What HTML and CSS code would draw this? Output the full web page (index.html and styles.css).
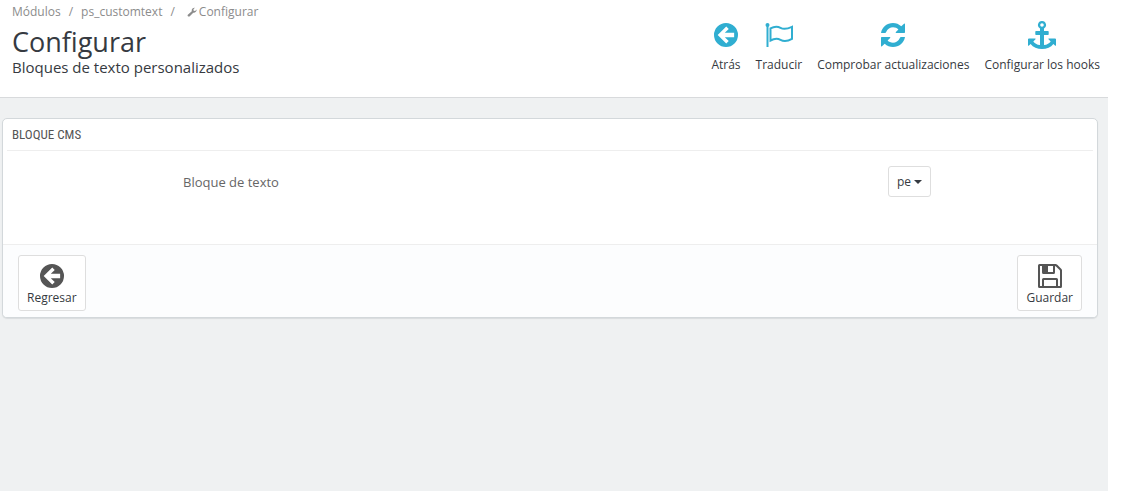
FILE: index.html
```html
<!DOCTYPE html>
<html lang="es">
<head>
    <meta charset="UTF-8">
    <meta name="viewport" content="width=device-width, initial-scale=1.0">
    <title>Configurar</title>
    <link rel="stylesheet" href="styles.css">
</head>
<body>

<div class="page">
    <!-- Header -->
    <header class="page-head">
        <div class="page-heading">
            <nav class="breadcrumb">
                <a href="#">Módulos</a>
                <span class="separator">/</span>
                <a href="#">ps_customtext</a>
                <span class="separator">/</span>
                <a href="#" class="current"><svg class="icon-wrench" viewBox="0 0 24 24"><path d="M2 18.500 11.500 10C10.500 5 14 1.500 19 2l-3.500 3.500 .5 3.500 3.500 .5L23 6c.5 5-3.500 8.500-8 7.500L6 22.500c-2.500 2-6-1.500-4-4z"/></svg>Configurar</a>
            </nav>
            <h1 class="page-title">Configurar</h1>
            <h4 class="page-subtitle">Bloques de texto personalizados</h4>
        </div>
        <div class="toolbar">
            <a href="#" class="toolbar-btn">
                <svg class="icon" viewBox="0 0 28 28"><path fill-rule="evenodd" d="M14 0a14 14 0 1 1 0 28a14 14 0 1 1 0-28zM4.300 14l10 10 2.900-2.900-4.600-4.600H23.500v-5H12.600l4.600-4.600L14.300 4z"/></svg>
                <span>Atrás</span>
            </a>
            <a href="#" class="toolbar-btn">
                <svg class="icon icon-flag" viewBox="0 0 28 24"><circle cx="2.500" cy="2" r="2"/><path d="M1.500 2h2v22h-2z"/><path class="stroke" d="M5.500 5.300c4-2.200 7-2.200 10-.5s6 1.500 11.500-1v12c-5 2.800-8.500 2.600-11.500 1s-6-1.500-10 .7z"/></svg>
                <span>Traducir</span>
            </a>
            <a href="#" class="toolbar-btn">
                <svg class="icon" viewBox="0 0 24 24"><path d="M0 10C1 4 6 0 12 0c3.100 0 6 1.200 8.300 3.300L23 .8q1-.7 1 .4v8.100q0 .7-.7.700h-8q-1.200 0-.4-1l2.500-2.600C14.500 3.300 7.500 3 5 9.200q-.3.800-.8.800zM24 14c-1 6-6 10-12 10-3.100 0-6-1.200-8.300-3.300L1 23.200q-1 .7-1-.4v-8.100q0-.7.7-.7h8q1.200 0 .4 1l-2.500 2.600c2.900 3.100 9.900 3.400 12.400-2.800q.3-.8.800-.8z"/></svg>
                <span>Comprobar actualizaciones</span>
            </a>
            <a href="#" class="toolbar-btn">
                <svg class="icon icon-anchor" viewBox="0 0 28 28"><path fill-rule="evenodd" d="M14 0a4 4 0 0 1 2 7.500V10h4q.7 0 .7.700v2.600q0 .7-.7.700h-4v10c3-.4 5.500-1.700 6.700-3.600L20.500 18.200q-.5-.8.400-.8H27q1 0 1 .8v6q-.2 1-1 .3l-1.600-1.500C23 26.300 18.700 28 14 28S5 26.300 2.600 23L1 24.500q-.8.700-1-.3v-6q0-.8 1-.8h6.100q.9 0 .4.800l-2.200 2.200C6.500 22.300 9 23.600 12 24V14H8q-.7 0-.7-.7v-2.600q0-.7.7-.7h4V7.500A4 4 0 0 1 14 0zM14 2.200a1.800 1.800 0 1 0 0 3.600a1.800 1.800 0 1 0 0-3.600z"/></svg>
                <span>Configurar los hooks</span>
            </a>
        </div>
    </header>

    <!-- Block form -->
    <main class="content">
        <form class="panel">
            <h3 class="panel-heading">BLOQUE CMS</h3>
            <div class="form-row">
                <span class="form-label">Bloque de texto</span>
                <button type="button" class="btn btn-lang">pe <svg class="caret" viewBox="0 0 8 4"><path d="M0 0h8L4 4z"/></svg></button>
            </div>
            <div class="panel-footer">
                <button type="button" class="btn btn-action">
                    <svg class="icon" viewBox="0 0 28 28"><path fill-rule="evenodd" d="M14 0a14 14 0 1 1 0 28a14 14 0 1 1 0-28zM4.300 14l10 10 2.900-2.900-4.600-4.600H23.500v-5H12.600l4.600-4.600L14.300 4z"/></svg>
                    <span>Regresar</span>
                </button>
                <button type="submit" class="btn btn-action">
                    <svg class="icon" viewBox="0 0 24 24"><path fill-rule="evenodd" d="M1.500 0H17.500q1 0 1.800.8L23.200 4.700q.8.800.8 1.800v16q0 1.500-1.500 1.500h-21Q0 24 0 22.500v-21Q0 0 1.500 0zM2 2v20h2v-6.500Q4 14 5.500 14h13q1.500 0 1.500 1.500V22h2V6.800q0-.4-.4-.8L18 2.400q-.4-.4-1-.4v6.500q0 1.500-1.500 1.500h-10Q4 10 4 8.500V2zM10 2v6h5V2zM6 16v6h12v-6z"/></svg>
                    <span>Guardar</span>
                </button>
            </div>
        </form>
    </main>
</div>

</body>
</html>
```
FILE: styles.css
```css
/* Basic Reset */
* {
    margin: 0;
    padding: 0;
    box-sizing: border-box;
}
body {
    font-family: "Open Sans", sans-serif;
    font-size: 12px;
    line-height: 16px;
    color: #363a41;
    background: #fff;
}
a {
    color: inherit;
    text-decoration: none;
}
svg {
    fill: currentColor;
}
.page {
    min-height: 100vh;
    margin-right: 13px;
    background: #eff1f2;
}

/* Header */
.page-head {
    display: flex;
    justify-content: space-between;
    padding: 4px 8px 22px 12px;
    background: #fff;
    border-bottom: 1px solid #d8dadc;
}
.breadcrumb {
    display: flex;
    gap: 8px;
    color: #8c8c8c;
}
.breadcrumb .current {
    padding-left: 4px;
}
.icon-wrench {
    width: 10px;
    height: 10px;
    margin-right: 2px;
    vertical-align: -1px;
}
.page-title {
    margin-top: 5px;
    font-size: 27px;
    font-weight: 400;
    line-height: 34px;
}
.page-subtitle {
    font-size: 15px;
    font-weight: 400;
    line-height: 16px;
}
.toolbar {
    display: flex;
    gap: 15px;
    padding-top: 19px;
}
.toolbar-btn {
    display: flex;
    flex-direction: column;
    align-items: center;
    gap: 10px;
}
.icon {
    width: 24px;
    height: 24px;
}
.toolbar .icon {
    color: #30aed1;
}
.icon-flag {
    width: 28px;
}
.icon-anchor {
    width: 28px;
    height: 28px;
    margin: -2px 0;
}
.stroke {
    fill: none;
    stroke: currentColor;
    stroke-width: 2;
}

/* Panel */
.content {
    padding: 20px 10px 20px 2px;
}
.panel {
    background: #fff;
    border: 1px solid #d3d8db;
    border-radius: 5px;
    box-shadow: 0 1px 1px #d9dcde;
    overflow: hidden;
}
.panel-heading {
    margin: 0 4px;
    padding: 0 5px;
    border-bottom: 1px solid #eee;
    color: #555;
    font-family: "Roboto Condensed", "Open Sans", sans-serif;
    font-size: 13px;
    font-weight: 400;
    line-height: 31px;
}
.form-row {
    display: flex;
    justify-content: space-between;
    align-items: center;
    padding: 15px 166px 47px 180px;
}
.form-label {
    color: #666;
    font-size: 13px;
}
.btn {
    background: #fff;
    border: 1px solid #dedede;
    border-radius: 3px;
    color: #363a41;
    font-family: inherit;
    font-size: 12px;
    line-height: 16px;
    cursor: pointer;
}
.btn-lang {
    display: flex;
    align-items: center;
    gap: 3px;
    height: 31px;
    padding: 0 8px;
}
.caret {
    width: 8px;
    height: 4px;
}
.panel-footer {
    display: flex;
    justify-content: space-between;
    padding: 10px 15px 6px;
    background: #fcfdfe;
    border-top: 1px solid #eee;
}
.btn-action {
    display: flex;
    flex-direction: column;
    align-items: center;
    gap: 2px;
    padding: 8px 8px 4px;
}
.btn-action .icon {
    color: #555;
}
```
